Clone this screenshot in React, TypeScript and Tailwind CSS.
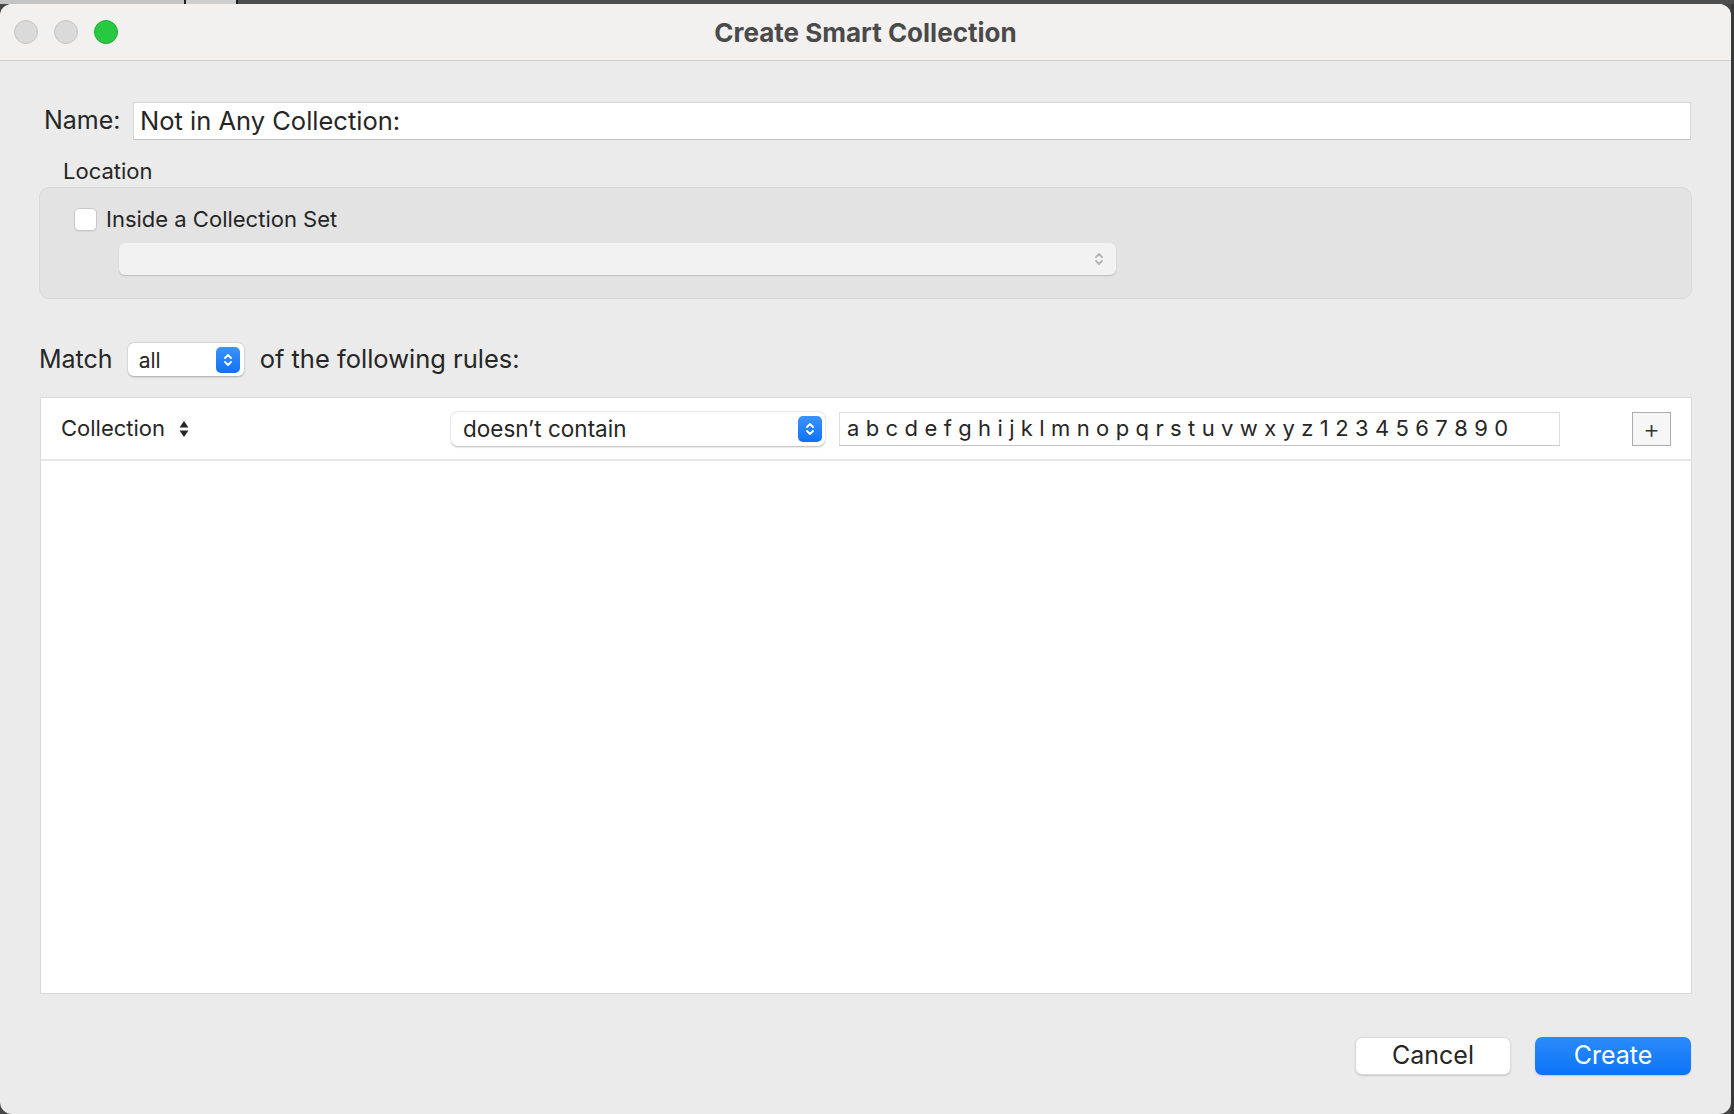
import React from 'react';

const Stepper = ({ color, className }: { color: string; className?: string }) => (
  <svg className={className} width="10" height="16" viewBox="0 0 10 16" fill="none" stroke={color} strokeWidth="1.8" strokeLinecap="round" strokeLinejoin="round">
    <path d="M2 6 L5 3 L8 6" />
    <path d="M2 10 L5 13 L8 10" />
  </svg>
);

const SortArrows = () => (
  <svg width="10" height="18" viewBox="0 0 10 18" fill="#262626">
    <path d="M5 1 L9.5 7.5 H0.5 Z" />
    <path d="M5 17 L9.5 10.5 H0.5 Z" />
  </svg>
);

const TrafficLight = ({ color, border }: { color: string; border: string }) => (
  <div className={`w-[24px] h-[24px] rounded-full border ${color} ${border}`} />
);

const letters = 'a b c d e f g h i j k l m n o p q r s t u v w x y z 1 2 3 4 5 6 7 8 9 0';

export default function App() {
  return (
    <div className="w-[1734px] h-[1114px] bg-[#474747] overflow-hidden flex flex-col [font-family:Inter,'Liberation_Sans',sans-serif] text-[#262626]">
      {/* strip of whatever sits behind the sheet */}
      <div className="h-[4px] flex shrink-0">
        <div className="w-[184px] bg-[#c4c4c4]" />
        <div className="w-[2px] bg-[#1e1e1e]" />
        <div className="w-[50px] bg-[#cfcfcf]" />
        <div className="w-[2px] bg-[#1e1e1e]" />
        <div className="flex-1 bg-[#4e4e4e]" />
      </div>

      <div className="flex flex-1">
        <div className="w-[1731px] h-[1110px] bg-[#ebebeb] rounded-[12px] overflow-hidden flex flex-col">
          {/* title bar */}
          <div className="h-[57px] shrink-0 bg-[#f2f1f0] border-b border-[#d2d1d0] grid grid-cols-[1fr_auto_1fr] items-center">
            <div className="flex items-center gap-[16px] pl-[14px]">
              <TrafficLight color="bg-[#dadada]" border="border-[#c6c6c6]" />
              <TrafficLight color="bg-[#dadada]" border="border-[#c6c6c6]" />
              <TrafficLight color="bg-[#28c840]" border="border-[#22ad37]" />
            </div>
            <div className="text-[26px] font-bold text-[#4a4a4a]">Create Smart Collection</div>
            <div />
          </div>

          {/* body */}
          <div className="flex flex-col px-[39px] pt-[41px]">
            <div className="flex items-center pl-[5px]">
              <span className="text-[25px] w-[89px]">Name:</span>
              <div className="flex-1 mr-[1px] h-[38px] bg-white border border-[#d6d6d6] border-b-[#c2c2c2] flex items-center pl-[6px] text-[25.5px]">
                Not in Any Collection:
              </div>
            </div>

            <div className="mt-[17px] h-[28px] leading-[28px] pl-[24px] text-[22px]">Location</div>

            <div className="mt-[2px] h-[112px] rounded-[10px] bg-[#e3e3e3] border border-[#d9d9d9] pl-[34px] pt-[20px] flex flex-col">
              <div className="flex items-center gap-[9px] h-[23px]">
                <div className="w-[23px] h-[23px] rounded-[5px] bg-white border border-[#c8c8c8] shadow-[0_1px_1px_rgba(0,0,0,0.06)]" />
                <span className="text-[22px]">Inside a Collection Set</span>
              </div>
              <div className="mt-[12px] ml-[45px] w-[997px] h-[32px] rounded-[6px] bg-[#f2f2f2] shadow-[0_1px_1.5px_rgba(0,0,0,0.18)] flex items-center justify-end pr-[12px]">
                <Stepper color="#b3b3b3" />
              </div>
            </div>

            <div className="mt-[44px] flex items-center h-[33px]">
              <span className="text-[25px]">Match</span>
              <div className="ml-[15px] w-[116px] h-[33px] rounded-[6px] bg-white shadow-[0_0.5px_2px_rgba(0,0,0,0.3)] flex items-center justify-between pl-[11px] pr-[4px]">
                <span className="text-[21px] pt-[3px]">all</span>
                <div className="w-[24px] h-[26px] rounded-[5px] bg-gradient-to-b from-[#3b92fb] to-[#0a73f5] flex items-center justify-center">
                  <Stepper color="#ffffff" />
                </div>
              </div>
              <span className="ml-[16px] text-[25.5px]">of the following rules:</span>
            </div>

            <div className="mt-[21px] ml-[1px] w-[1652px] h-[597px] bg-white border border-[#dadada] flex flex-col">
              <div className="h-[63px] flex items-center pl-[20px] pr-[20px] border-b-2 border-[#e6e6e6]">
                <div className="w-[390px] flex items-center gap-[14px]">
                  <span className="text-[22px]">Collection</span>
                  <SortArrows />
                </div>
                <div className="w-[374px] h-[34px] rounded-[7px] bg-white shadow-[0_0.5px_2px_rgba(0,0,0,0.3)] flex items-center justify-between pl-[12px] pr-[3px]">
                  <span className="text-[22.5px]">doesn’t contain</span>
                  <div className="w-[24px] h-[26px] rounded-[5px] bg-gradient-to-b from-[#3b92fb] to-[#0a73f5] flex items-center justify-center">
                    <Stepper color="#ffffff" />
                  </div>
                </div>
                <div className="ml-[14px] w-[721px] h-[34px] border border-[#dedede] border-b-[#c6c6c6] flex items-center pl-[7px] text-[22px] tracking-[0.1px] whitespace-pre">
                  {letters}
                </div>
                <div className="flex-1" />
                <div className="w-[39px] h-[34px] border border-[#acacac] bg-[#f6f6f6] flex items-center justify-center text-[26px] leading-none font-light text-[#333]">
                  +
                </div>
              </div>
            </div>

            <div className="mt-[43px] flex justify-end gap-[24px] pr-[1px]">
              <div className="w-[156px] h-[38px] rounded-[7px] bg-white border border-[#dadada] shadow-[0_1px_1.5px_rgba(0,0,0,0.15)] flex items-center justify-center text-[25px]">
                Cancel
              </div>
              <div className="w-[156px] h-[38px] rounded-[7px] bg-gradient-to-b from-[#2a8bfb] to-[#0a74f7] shadow-[0_1px_1.5px_rgba(0,0,0,0.15)] flex items-center justify-center text-[25px] text-white">
                Create
              </div>
            </div>
          </div>
        </div>
        <div className="flex-1 bg-[#3a3a3a]" />
      </div>
    </div>
  );
}
